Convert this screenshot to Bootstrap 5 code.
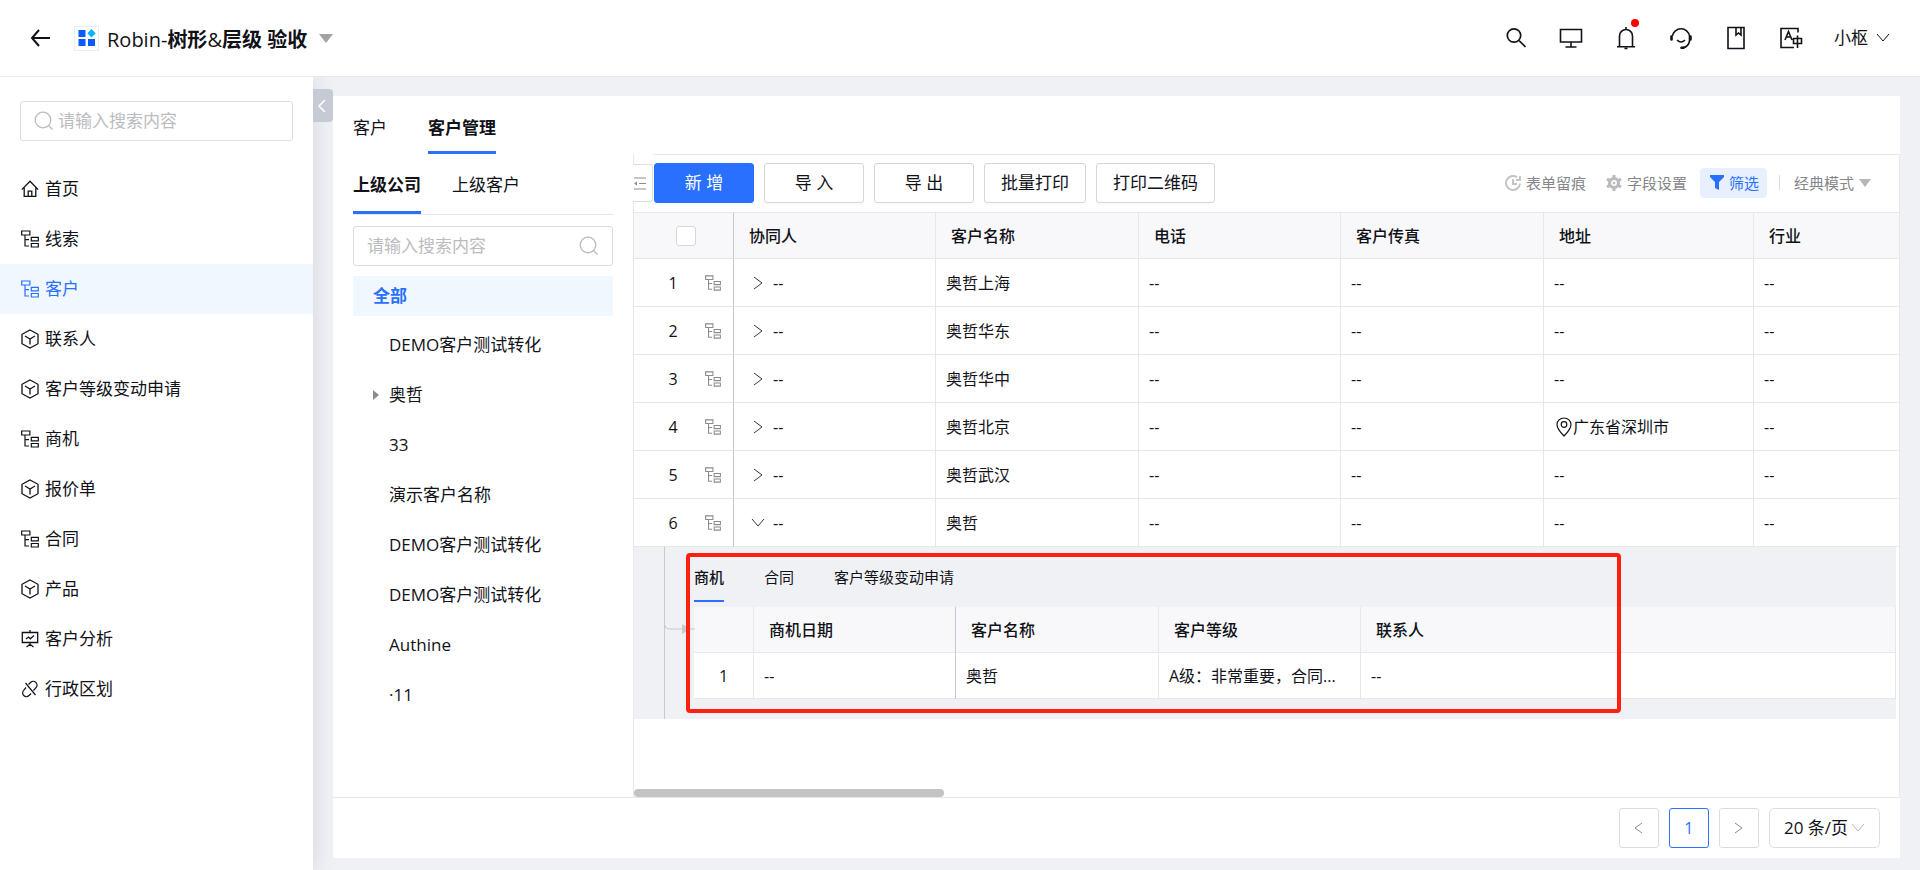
<!DOCTYPE html>
<html lang="zh-CN">
<head>
<meta charset="utf-8">
<meta name="viewport" content="width=device-width, initial-scale=1">
<title>Robin-树形&amp;层级 验收</title>
<link href="https://cdn.jsdelivr.net/npm/bootstrap@5.3.0/dist/css/bootstrap.min.css" rel="stylesheet">
<style>
:root{--ink:#111218;--brand:#2970ff;--rule:#e6e7e9;--field:#dcdde0;--page:#f0f1f5;--soft:#f0f7ff}
body{font-family:"Open Sans","Noto Sans CJK SC",sans-serif;font-size:17px;line-height:24px;font-weight:400;color:var(--ink);background:var(--page)}
svg{display:block;flex:none;fill:none}
svg:not([stroke]){stroke:currentColor}
a{color:inherit;text-decoration:none}
button{color:inherit}
.topbar{height:77px;border-bottom:1px solid #e8e9ec;padding:0 30px;position:relative;z-index:3}
.topbar h1{font-size:20px;line-height:28px;font-weight:700;padding-top:3px}
.app-logo{width:25px;height:25px;border:1px solid #ececee}
.plain{border:0;background:none;padding:0}
.tools{gap:31px}
.tool{width:24px;display:flex;justify-content:center}
.dot-new{position:absolute;top:-7px;right:-1px;width:8px;height:8px;border-radius:50%;background:#f00}
.side{width:313px;padding-top:24px;box-shadow:0 0 22px rgba(30,40,80,.13);z-index:2}
.find{height:40px;padding:0 13px;border:1px solid var(--field);border-radius:3px;color:#bbbcc0;background:#fff}
.find input{border:0;outline:0;background:none;min-width:0;color:var(--ink)}
.find input::placeholder{color:#bbbcc0;opacity:1}
.side .find{margin:0 20px}
.side nav{margin-top:23px}
.side nav a{height:50px;padding-left:21px;gap:6px}
.side nav a.active{background:var(--soft);color:var(--brand)}
.fold{position:absolute;left:100%;top:12px;width:20px;height:33px;border:0;padding:0 0 0 4px;border-radius:0 4px 4px 0;background:#c5cad5;color:#fff}
.panel{margin:19px 20px 12px 20px}
.tab-row a{border-bottom:3px solid transparent}
.tab-row a.active{font-weight:700;border-color:var(--brand)}
.tabs-main{height:58px;padding:0 20px;gap:41px}
.tabs-main a{padding-top:20px}
.tree-col{width:300px;padding:0 20px}
.tabs-tree{height:61px;gap:31px;border-bottom:1px solid var(--rule)}
.tabs-tree a{padding-top:19px}
.tree-col .find{margin-top:11px}
.tree-col ul{margin:10px 0 0}
.tree-col li a{height:50px;padding-left:36px}
.tree-col li.all a{height:40px;padding-left:20px;background:var(--soft);color:var(--brand);font-weight:700}
.tree-col li.all{margin-bottom:4px}
.twist{width:16px;margin-left:-16px;color:#8c8c90}
.grid-col{min-width:0;border-left:1px solid var(--rule)}
.bar{margin-left:19px;height:58px;border-top:1px solid var(--rule);border-right:1px solid var(--rule);padding:0 28px 2px 1px}
.tuck{position:absolute;left:-1px;top:10px;width:20px;height:38px;border:1px solid var(--field);border-left:0;border-radius:0 3px 3px 0;background:#fff;padding:0 0 0 1px;color:#8c8c90}
.acts{gap:10px}
.bar .btn{height:40px;min-width:100px;padding:0 16px;border:1px solid #d5d6d9;border-radius:3px;font-size:17px;font-weight:400;color:var(--ink);background:#fff;box-shadow:0 2px 0 rgba(0,0,0,.015)}
.bar .btn.main-act{background:var(--brand);border-color:var(--brand);color:#fff}
.bar-side{font-size:15px;color:#85868a}
.bar-side .plain{gap:5px}
.bar-side .filter{height:30px;margin-left:13px;padding:0 8px 0 10px;border-radius:4px;background:#e8f0ff;color:var(--brand)}
.vr-thin{width:1px;height:15px;margin:0 14px 0 12px;background:#dcdde0}
.data{width:100%;table-layout:fixed;border-collapse:separate;border-spacing:0;font-size:16px}
.data th,.data td{border-right:1px solid var(--rule);border-bottom:1px solid var(--rule);padding:0 0 0 10px;height:48px;font-weight:400;white-space:nowrap;overflow:hidden;text-overflow:ellipsis}
.data th{height:46px;padding:0 0 0 15px;background:#f8f8fa;font-weight:500}
.data .pin{border-right-color:#c6c7d2}
.outer{border-top:1px solid var(--rule)}
.data .num{display:inline-block;width:71px;padding-left:7px;text-align:center}
.box{width:20px;height:20px;margin:0 0 0 42px;border:1px solid #d5d6d9;border-radius:3px;background:#fff;appearance:none;display:block}
.idx{color:#8c8c90}
.exp{gap:10px;padding-left:9px}
.exp svg{color:#333}
.exp.open{gap:8px;padding-left:7px}
.data td.more{padding:0 3px 0 0;border-bottom:0;white-space:normal;overflow:visible}
.detail{background:var(--page)}
.rail{width:30px;margin-left:30px;border-left:1px solid #c8c9cc}
.rail svg{position:absolute;left:0;top:74px;color:#c8c9cc}
.detail-body{min-width:0;padding-bottom:20px}
.sub-tabs{height:60px;gap:40px;font-size:15px}
.sub-tabs a{height:55px;padding-top:18px;border-bottom:2px solid transparent}
.sub-tabs a.active{font-weight:500;border-color:var(--brand)}
.inner{background:#fff}
.inner td{height:46px}
.inner td.text-center{padding:0}
.callout{position:absolute;left:52px;top:6px;right:275px;bottom:6px;border:4px solid #ff2010;border-radius:4px;pointer-events:none}
.rest{border-right:1px solid var(--rule)}
.thumb{width:310px;height:8px;border-radius:4px;background:#c2c3c5}
.foot{height:61px;border-top:1px solid var(--rule);padding:0 20px;gap:10px}
.pg{width:40px;height:40px;border:1px solid var(--field);border-radius:3px;background:#fff;padding:0;color:#8c8c90;font-size:16px}
.pg.on{border-color:var(--brand);color:var(--brand)}
.size{width:111px;height:40px;border:1px solid var(--field);border-radius:5px;padding:0 0 0 14px;color:var(--ink);appearance:none;background:#fff url("data:image/svg+xml,%3Csvg xmlns='http://www.w3.org/2000/svg' width='14' height='10' fill='none' stroke='%23b5b6ba'%3E%3Cpath d='M1 1l6 7 6-7'/%3E%3C/svg%3E") no-repeat right 14px center}
</style>
</head>
<body class="min-vh-100 d-flex flex-column">
<svg width="0" height="0" class="position-absolute" aria-hidden="true">
<symbol id="i-home" viewBox="0 0 18 18"><path d="M.8 9.6 9 1.2l8.2 8.4M3.2 7.8v8.6h11.6V7.8M7.2 16.4v-5.2h3.6v5.2" stroke-width="1.3"/></symbol>
<symbol id="i-tree" viewBox="0 0 18 18"><path d="M.7 1h8.2v4H.7zM4 5v11h4M4 9.600h4M10.300 7.300h7v3.500h-7zM10.300 13.500h7V17h-7z" stroke-width="1.2"/></symbol>
<symbol id="i-cube" viewBox="0 0 18 20"><path d="M9 1l8 4.300v9.400L9 19l-8-4.300V5.300zM4 7l5 3 5-3M9 10v5.500" stroke-width="1.3"/></symbol>
<symbol id="i-board" viewBox="0 0 18 18"><path d="M9 0v2.500M1.300 2.500h15.400v10H1.300zM5 9l2.500-2 1.800 1.800L13 5.500M9 12.500v2M5.500 17L9 14.300l3.500 2.700" stroke-width="1.3"/></symbol>
<symbol id="i-link" viewBox="0 0 18 18"><path d="M7.500 4.500l2-2a3.700 3.700 0 0 1 5.500 5.200l-2.500 2.800M10 13.500l-2 2A3.700 3.700 0 0 1 2.700 10.300L5 7.500M4.500 3l10 12" stroke-width="1.2"/></symbol>
<symbol id="i-find" viewBox="0 0 20 20"><circle cx="9" cy="9" r="7.800" stroke-width="1.300"/><path d="M14.500 14.500l4 4" stroke-width="1.300"/></symbol>
<symbol id="i-right" viewBox="0 0 10 14"><path d="M1 1l8 6-8 6"/></symbol>
</svg>

<header class="topbar bg-white d-flex align-items-center">
  <button class="plain" aria-label="返回"><svg width="20" height="18" viewBox="0 0 20 18" stroke-width="2"><path d="M9 1L2 9l7 8M2 9h18"/></svg></button>
  <span class="app-logo d-flex align-items-center justify-content-center ms-4"><svg width="18" height="18" viewBox="0 0 18 18" stroke="none"><path fill="#0b5cff" d="M.500 1h7v7h-7zM.500 10h7v7h-7zM10 10h7v7h-7z"/><path fill="#0bb4ff" d="M13.500 0l4.200 4.200-4.200 4.200-4.200-4.200z"/></svg></span>
  <h1 class="m-0 ms-2"><span class="fw-normal">Robin-</span>树形<span class="fw-normal">&amp;</span>层级 验收</h1>
  <button class="plain ms-2 ps-1" aria-label="切换应用"><svg width="14" height="9" viewBox="0 0 14 9" stroke="none"><path fill="#a3a3a5" d="M0 0h14L7 9z"/></svg></button>
  <div class="tools d-flex align-items-center ms-auto">
    <button class="plain tool" aria-label="搜索"><svg width="22" height="22" viewBox="0 0 22 22" stroke-width="1.700"><circle cx="9" cy="8.500" r="6.700"/><path d="M14 13.500l6.500 6.500"/></svg></button>
    <button class="plain tool" aria-label="桌面"><svg width="24" height="22" viewBox="0 0 24 22" stroke-width="1.600"><path d="M1.500 2.500h21v12.500h-21zM12 15v4.500M6.500 20h11"/></svg></button>
    <button class="plain tool position-relative" aria-label="通知"><svg width="20" height="24" viewBox="0 0 20 24" stroke-width="1.600"><path d="M3.500 20.500V10a6.500 6.500 0 0 1 13 0v10.500M1 20.700h18M10 1v2.500M8.500 22.500h3"/></svg><span class="dot-new"></span></button>
    <button class="plain tool" aria-label="客服"><svg width="24" height="24" viewBox="0 0 24 24" stroke-width="1.600"><path d="M3.500 10a8.600 8.600 0 0 1 17 0v5q-1 6-7 6.800M8 14q4 4 8 0"/><path d="M2.500 10.500v3M21.500 10.500v3M12.500 21.800h2" stroke-width="2.600" stroke-linecap="round"/></svg></button>
    <button class="plain tool" aria-label="手册"><svg width="20" height="24" viewBox="0 0 20 24" stroke-width="1.600"><path d="M2 1.500h16v21H2zM10 2v7l2.500-2 2.500 2V2"/></svg></button>
    <button class="plain tool" aria-label="语言"><svg width="24" height="22" viewBox="0 0 24 22" stroke-width="1.600"><path d="M19 5.500V1.500H2v19h13M6 13l3.500-8.500L13 13M7.200 10h4.600M14.500 11.500h8v5h-8zM18.500 8.500v12.500"/></svg></button>
    <button class="plain d-flex align-items-center gap-2">小枢 <svg width="14" height="10" viewBox="0 0 14 10"><path d="M1 1l6 7 6-7"/></svg></button>
  </div>
</header>

<div class="d-flex flex-grow-1">
  <aside class="side bg-white position-relative flex-shrink-0">
    <button class="fold" aria-label="收起菜单"><svg width="10" height="14"><path d="M8 1L2 7l6 6" stroke-width="1.500"/></svg></button>
    <label class="find d-flex align-items-center"><svg width="20" height="20"><use href="#i-find"/></svg><input class="flex-grow-1 ms-1 p-0" type="text" placeholder="请输入搜索内容" aria-label="搜索菜单"></label>
    <nav>
      <a href="#" class="d-flex align-items-center"><svg width="18" height="18"><use href="#i-home"/></svg>首页</a>
      <a href="#" class="d-flex align-items-center"><svg width="18" height="18"><use href="#i-tree"/></svg>线索</a>
      <a href="#" class="d-flex align-items-center active"><svg width="18" height="18"><use href="#i-tree"/></svg>客户</a>
      <a href="#" class="d-flex align-items-center"><svg width="18" height="20"><use href="#i-cube"/></svg>联系人</a>
      <a href="#" class="d-flex align-items-center"><svg width="18" height="20"><use href="#i-cube"/></svg>客户等级变动申请</a>
      <a href="#" class="d-flex align-items-center"><svg width="18" height="18"><use href="#i-tree"/></svg>商机</a>
      <a href="#" class="d-flex align-items-center"><svg width="18" height="20"><use href="#i-cube"/></svg>报价单</a>
      <a href="#" class="d-flex align-items-center"><svg width="18" height="18"><use href="#i-tree"/></svg>合同</a>
      <a href="#" class="d-flex align-items-center"><svg width="18" height="20"><use href="#i-cube"/></svg>产品</a>
      <a href="#" class="d-flex align-items-center"><svg width="18" height="18"><use href="#i-board"/></svg>客户分析</a>
      <a href="#" class="d-flex align-items-center"><svg width="18" height="18"><use href="#i-link"/></svg>行政区划</a>
    </nav>
  </aside>

  <main class="panel bg-white flex-grow-1 d-flex flex-column overflow-hidden">
    <div class="tabs-main tab-row d-flex"><a href="#">客户</a><a href="#" class="active">客户管理</a></div>
    <div class="d-flex flex-grow-1">
      <section class="tree-col flex-shrink-0">
        <div class="tabs-tree tab-row d-flex"><a href="#" class="active">上级公司</a><a href="#">上级客户</a></div>
        <label class="find d-flex align-items-center"><input class="flex-grow-1 p-0" type="text" placeholder="请输入搜索内容" aria-label="搜索客户"><svg width="20" height="20"><use href="#i-find"/></svg></label>
        <ul class="list-unstyled">
          <li class="all"><a href="#" class="d-flex align-items-center">全部</a></li>
          <li><a href="#" class="d-flex align-items-center">DEMO客户测试转化</a></li>
          <li><a href="#" class="d-flex align-items-center"><span class="twist"><svg width="6" height="10" stroke="none"><path d="M0 0l6 5-6 5z" fill="currentColor"/></svg></span>奥哲</a></li>
          <li><a href="#" class="d-flex align-items-center">33</a></li>
          <li><a href="#" class="d-flex align-items-center">演示客户名称</a></li>
          <li><a href="#" class="d-flex align-items-center">DEMO客户测试转化</a></li>
          <li><a href="#" class="d-flex align-items-center">DEMO客户测试转化</a></li>
          <li><a href="#" class="d-flex align-items-center">Authine</a></li>
          <li><a href="#" class="d-flex align-items-center">·11</a></li>
        </ul>
      </section>

      <section class="grid-col flex-grow-1 position-relative d-flex flex-column">
        <button class="tuck" aria-label="收起树"><svg width="12" height="13"><path d="M0 1h12M5 6.500h7M0 12h12"/><path d="M0 6.500l3-2v4z" fill="currentColor" stroke="none"/></svg></button>
        <div class="bar d-flex align-items-center justify-content-between">
          <div class="acts d-flex">
            <button class="btn main-act">新 增</button><button class="btn">导 入</button><button class="btn">导 出</button><button class="btn">批量打印</button><button class="btn">打印二维码</button>
          </div>
          <div class="bar-side d-flex align-items-center">
            <button class="plain d-flex align-items-center"><svg width="16" height="16" stroke="#c3c4c7" stroke-width="2"><path d="M12 2.200A7 7 0 1 0 15 8.500M8 4v5h4M11 5h4V1"/></svg>表单留痕</button>
            <button class="plain d-flex align-items-center ms-3 ps-1"><svg width="16" height="16" viewBox="0 0 16 16" stroke="#b9babd"><circle cx="8" cy="8" r="4.500" stroke-width="3"/><path d="M8 0v3M8 13v3M1 4l2.500 1.500M12.500 10.500L15 12M1 12l2.500-1.500M12.500 5.500L15 4" stroke-width="3"/><circle cx="8" cy="8" r="1" fill="#b9babd"/></svg>字段设置</button>
            <button class="plain filter d-flex align-items-center"><svg width="14" height="15" stroke="none"><path d="M0 0h14v2L9 7v8l-4-2V7L0 2z" fill="currentColor"/></svg>筛选</button>
            <span class="vr-thin"></span>
            <button class="plain d-flex align-items-center">经典模式<svg width="12" height="8" stroke="none"><path d="M0 0h12L6 8z" fill="#b5b6b9"/></svg></button>
          </div>
        </div>
        <table class="data outer">
          <colgroup><col style="width:100px"><col style="width:202px"><col style="width:203px"><col style="width:202px"><col style="width:203px"><col style="width:210px"><col></colgroup>
          <thead><tr><th class="pin p-0"><input class="box" type="checkbox" aria-label="全选"></th><th>协同人</th><th>客户名称</th><th>电话</th><th>客户传真</th><th>地址</th><th>行业</th></tr></thead>
          <tbody>
            <tr><td class="pin p-0"><div class="d-flex align-items-center"><span class="num">1</span><svg class="idx" width="16" height="16"><use href="#i-tree"/></svg></div></td><td><div class="exp d-flex align-items-center"><svg width="10" height="14"><use href="#i-right"/></svg>--</div></td><td>奥哲上海</td><td>--</td><td>--</td><td>--</td><td>--</td></tr>
            <tr><td class="pin p-0"><div class="d-flex align-items-center"><span class="num">2</span><svg class="idx" width="16" height="16"><use href="#i-tree"/></svg></div></td><td><div class="exp d-flex align-items-center"><svg width="10" height="14"><use href="#i-right"/></svg>--</div></td><td>奥哲华东</td><td>--</td><td>--</td><td>--</td><td>--</td></tr>
            <tr><td class="pin p-0"><div class="d-flex align-items-center"><span class="num">3</span><svg class="idx" width="16" height="16"><use href="#i-tree"/></svg></div></td><td><div class="exp d-flex align-items-center"><svg width="10" height="14"><use href="#i-right"/></svg>--</div></td><td>奥哲华中</td><td>--</td><td>--</td><td>--</td><td>--</td></tr>
            <tr><td class="pin p-0"><div class="d-flex align-items-center"><span class="num">4</span><svg class="idx" width="16" height="16"><use href="#i-tree"/></svg></div></td><td><div class="exp d-flex align-items-center"><svg width="10" height="14"><use href="#i-right"/></svg>--</div></td><td>奥哲北京</td><td>--</td><td>--</td><td><div class="d-flex align-items-center"><svg width="19" height="20" viewBox="0 0 19 20" stroke-width="1.200"><path d="M10 19Q3 12 3 7.500a7 6.500 0 0 1 14 0Q17 12 10 19z"/><circle cx="10" cy="7.500" r="2.800"/></svg>广东省深圳市</div></td><td>--</td></tr>
            <tr><td class="pin p-0"><div class="d-flex align-items-center"><span class="num">5</span><svg class="idx" width="16" height="16"><use href="#i-tree"/></svg></div></td><td><div class="exp d-flex align-items-center"><svg width="10" height="14"><use href="#i-right"/></svg>--</div></td><td>奥哲武汉</td><td>--</td><td>--</td><td>--</td><td>--</td></tr>
            <tr><td class="pin p-0"><div class="d-flex align-items-center"><span class="num">6</span><svg class="idx" width="16" height="16"><use href="#i-tree"/></svg></div></td><td><div class="exp open d-flex align-items-center"><svg width="14" height="10"><path d="M1 1l6 7 6-7"/></svg>--</div></td><td>奥哲</td><td>--</td><td>--</td><td>--</td><td>--</td></tr>
            <tr><td class="more" colspan="7">
              <div class="detail position-relative d-flex">
                <div class="rail position-relative flex-shrink-0"><svg width="30" height="14"><path d="M0 4q0 4 4 4h26"/><path d="M17 3l9 5-9 5z" fill="currentColor" stroke="none"/></svg></div>
                <div class="detail-body flex-grow-1">
                  <div class="sub-tabs d-flex"><a href="#" class="active">商机</a><a href="#">合同</a><a href="#">客户等级变动申请</a></div>
                  <table class="data inner">
                    <colgroup><col style="width:60px"><col style="width:202px"><col style="width:203px"><col style="width:202px"><col></colgroup>
                    <thead><tr><th></th><th class="pin">商机日期</th><th>客户名称</th><th>客户等级</th><th>联系人</th></tr></thead>
                    <tbody><tr><td class="text-center">1</td><td class="pin">--</td><td>奥哲</td><td>A级：非常重要，合同...</td><td>--</td></tr></tbody>
                  </table>
                </div>
                <div class="callout"></div>
              </div>
            </td></tr>
          </tbody>
        </table>
        <div class="rest flex-grow-1 d-flex align-items-end"><div class="thumb"></div></div>
      </section>
    </div>
    <footer class="foot d-flex align-items-center justify-content-end">
      <button class="pg" aria-label="上一页"><svg class="mx-auto" width="9" height="12"><path d="M8 1L1 6l7 5"/></svg></button>
      <button class="pg on">1</button>
      <button class="pg" aria-label="下一页"><svg class="mx-auto" width="9" height="12"><path d="M1 1l7 5-7 5"/></svg></button>
      <select class="size" aria-label="每页条数"><option>20 条/页</option></select>
    </footer>
  </main>
</div>
<script src="https://cdn.jsdelivr.net/npm/bootstrap@5.3.0/dist/js/bootstrap.bundle.min.js"></script>
</body>
</html>
